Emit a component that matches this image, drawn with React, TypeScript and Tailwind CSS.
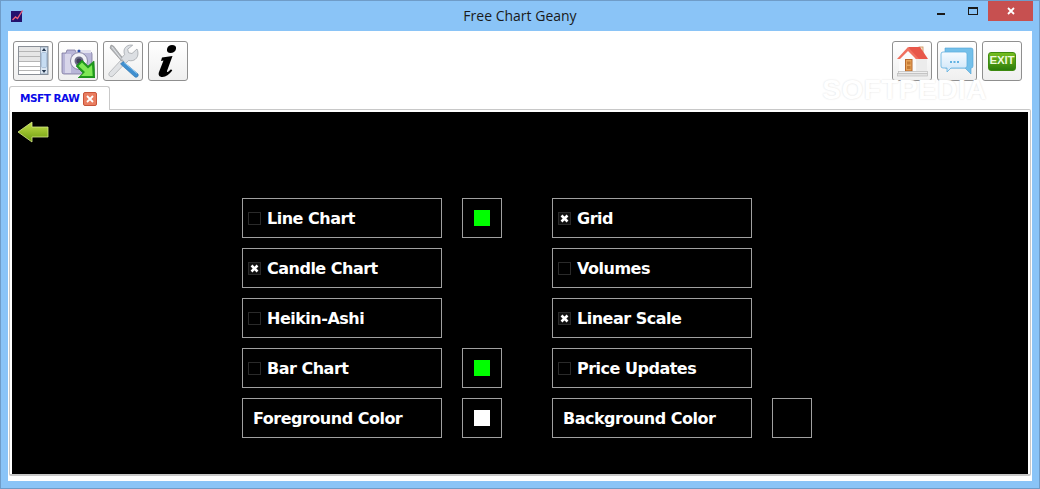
import React from 'react';

const frameFont = { fontFamily: '"Open Sans", sans-serif' };

// toolbar icons
const ListIcon = () => (
  <svg width="34" height="34" viewBox="0 0 34 34">
    <rect x="2.500" y="2.500" width="29.500" height="28" fill="#fff" stroke="#8a8f96" />
    <rect x="3" y="3" width="21" height="15" fill="#d6d6d6" opacity="0.6" />
    <path d="M3 7.500h21M3 12.500h21M3 17.500h21M3 22.500h21M3 26.500h21" stroke="#b5b5b5" />
    <rect x="24.500" y="3" width="7" height="27" fill="#dbe6f2" stroke="#7d8ea3" strokeWidth="0.7" />
    <rect x="25.500" y="8.500" width="5" height="15" rx="1" fill="#c6dcf2" stroke="#8aa5c4" strokeWidth="0.5" />
    <path d="M28 4l2.200 3h-4.400zM28 29l2.200-3h-4.400z" fill="#26384f" />
  </svg>
);

const CameraIcon = () => (
  <svg width="34" height="34" viewBox="0 0 34 34">
    <path d="M1 9h4l1-3h8l1 2h14a2 2 0 0 1 2 2v18a2 2 0 0 1-2 2H3a2 2 0 0 1-2-2z" fill="#b9b6d8" stroke="#7d7a9f" strokeWidth="0.8" />
    <rect x="4" y="10" width="6" height="19" fill="#d8d6ea" />
    <rect x="15" y="6" width="15" height="3" fill="#e2e0ee" />
    <circle cx="18" cy="7" r="1.500" fill="#2c4fa8" />
    <circle cx="18" cy="17" r="8.500" fill="#f1f1f6" stroke="#8a88a6" />
    <circle cx="18" cy="17" r="4.500" fill="#6a6985" />
    <circle cx="18" cy="17" r="2.500" fill="#3f3e57" />
    <path d="M15 22l6-6 6 6 6-5 1 17H17l5-5z" fill="#1f9a1c" stroke="#17801a" strokeWidth="0.6" />
    <path d="M17.500 22l3.500-3.500 6 6 4-3.500.7 11H20l4-4z" fill="#7fe855" />
  </svg>
);

const ToolsIcon = () => (
  <svg width="34" height="34" viewBox="0 0 34 34">
    <path d="M5 1l2.500 1 10 13-2 2L4 4z" fill="#b4b7bb" stroke="#777" strokeWidth="0.5" />
    <path d="M6 3l10 13" stroke="#eef0f2" strokeWidth="0.8" />
    <path d="M15 16L3.500 28.500c-2 2.500 1 5.500 3.500 3.500L18.500 20z" fill="#e0e2e5" stroke="#9a9da1" strokeWidth="0.6" />
    <path d="M31 5l-5 4.500-3.500-.8-.8-3.500 5-4c-4.500-1-9 2-8.700 6.500 0 1 .2 2 .6 2.800L15 14.500l4.500 5 3.200-3c5 1.300 9.500-2 9.300-7.500 0-1.500-.4-3-1-4z" fill="#dcdfe3" stroke="#8c9095" strokeWidth="0.6" />
    <path d="M17 17.500l15 12.500c1 2-1 4-3 3L14.500 20z" fill="#3f8fd0" stroke="#2a6ea8" strokeWidth="0.6" />
    <path d="M18 18.500l13 11" stroke="#8cc6f0" strokeWidth="1" />
  </svg>
);

const InfoIcon = () => (
  <svg width="34" height="34" viewBox="0 0 34 34">
    <path d="M21 1c3 0 4.500 1.500 4 4-.5 2.500-3 4-5.500 4S15.500 7.500 16 5c.5-2.500 2.500-4 5-4z" fill="#000" />
    <path d="M11 13.500l10.500-1.500L16 27c-.3 1 .7 1.200 1.500.6l2.500-2.300 1.300 1.200C18 30.500 15 33 11.500 33 8 33 7 30.800 8 28l4.500-11.500-2.500.5z" fill="#000" />
  </svg>
);

const HomeIcon = () => (
  <svg width="34" height="34" viewBox="0 0 34 34">
    <rect x="24" y="3" width="4" height="8" fill="#f5e6cf" stroke="#c98b50" strokeWidth="0.8" />
    <path d="M4 15l9-8 8 8v12H4z" fill="#fbfbfb" />
    <path d="M21 15h11v12H21z" fill="#ececec" />
    <path d="M13 3h12l8 12H21z" fill="#e8574a" />
    <path d="M13 3L2 15h3l8-8 8 8h3z" fill="#f0705f" />
    <rect x="10.500" y="15.500" width="6.500" height="11.500" fill="#e7a45a" stroke="#b8692c" />
    <rect x="12" y="17.500" width="3.500" height="3" fill="#c67b35" />
    <rect x="12" y="22" width="3.500" height="3" fill="#c67b35" />
    <rect x="3.500" y="27.500" width="29" height="2" fill="#efefef" stroke="#bdbdbd" strokeWidth="0.7" />
    <rect x="2.500" y="29.500" width="30" height="2.500" fill="#e2e2e2" stroke="#bdbdbd" strokeWidth="0.7" />
  </svg>
);

const ChatIcon = () => (
  <svg width="34" height="34" viewBox="0 0 34 34">
    <defs>
      <linearGradient id="chatFront" x1="0" y1="0" x2="0" y2="1">
        <stop offset="0" stopColor="#f6fbff" />
        <stop offset="1" stopColor="#cde5f8" />
      </linearGradient>
    </defs>
    <path d="M5 4h26a2 2 0 0 1 2 2v16a2 2 0 0 1-2 2v6l-6-6H5z" fill="#74c0ea" stroke="#4da3d6" strokeWidth="0.6" />
    <path d="M3 8h22a2 2 0 0 1 2 2v12a2 2 0 0 1-2 2H11l-4 4v-4H3a2 2 0 0 1-2-2V10a2 2 0 0 1 2-2z" fill="url(#chatFront)" stroke="#5fb0e0" strokeWidth="0.8" />
    <rect x="10" y="17" width="2" height="2" fill="#62b2e2" />
    <rect x="13.500" y="17" width="2" height="2" fill="#62b2e2" />
    <rect x="17" y="17" width="2" height="2" fill="#62b2e2" />
  </svg>
);

const ExitBadge = () => (
  <span className="flex h-[19px] w-[28px] items-center justify-center rounded-[3px] border border-[#3d8a10] bg-gradient-to-b from-[#74bd1e] to-[#2c7d0a] text-[11.5px] leading-none font-bold tracking-[-0.2px] text-[#eef9d8] font-['Liberation_Sans',sans-serif]">
    EXIT
  </span>
);

const BackArrow = () => (
  <svg width="32" height="22" viewBox="0 0 32 22" className="block">
    <defs>
      <linearGradient id="backFill" x1="0" y1="0" x2="0" y2="1">
        <stop offset="0" stopColor="#c4e04a" />
        <stop offset="1" stopColor="#6b9a0e" />
      </linearGradient>
    </defs>
    <path d="M1 11L15 1v5h16v10H15v5z" fill="url(#backFill)" stroke="#d8ea8a" strokeWidth="0.8" />
  </svg>
);

const ToolButton = ({ children }: { children: React.ReactNode }) => (
  <button className="flex h-[40px] w-[40px] items-center justify-center rounded-[3px] border border-[#8f8f8f] bg-gradient-to-b from-white to-[#efefef]">
    {children}
  </button>
);

const OptionRow = ({ label, checked }: { label: string; checked?: boolean }) => (
  <div className="flex h-[40px] w-[200px] items-center border border-[#a0a0a0] pl-[5px]">
    <span className={`flex h-[13px] w-[13px] items-center justify-center border border-[#2a2a2a] ${checked ? 'bg-[#111]' : ''}`}>
      {checked && (
        <svg width="9" height="9" viewBox="0 0 9 9">
          <path d="M1.500 1.500l6 6M7.500 1.500l-6 6" stroke="#fff" strokeWidth="2.600" />
        </svg>
      )}
    </span>
    <span className="mt-[1px] ml-[6px] text-[16px] leading-none font-bold tracking-[-0.5px] text-white">{label}</span>
  </div>
);

const ColorLabel = ({ label }: { label: string }) => (
  <div className="flex h-[40px] w-[200px] items-center border border-[#a0a0a0] pl-[10px]">
    <span className="mt-[1px] text-[16px] leading-none font-bold tracking-[-0.5px] text-white">{label}</span>
  </div>
);

const Swatch = ({ color }: { color?: string }) => (
  <div className="flex h-[40px] w-[40px] items-center justify-center border border-[#a0a0a0]">
    {color === 'green' && <div className="h-[16px] w-[16px] bg-[#00ff00]" />}
    {color === 'white' && <div className="h-[16px] w-[16px] bg-white" />}
  </div>
);

const Empty = () => <div className="h-[40px] w-[40px]" />;

export default function App() {
  return (
    <div className="flex h-[489px] w-[1040px] flex-col overflow-hidden border border-[#6f9cc8] bg-[#8ac4f7] font-['DejaVu_Sans',sans-serif]">
      {/* title bar */}
      <div className="flex h-[30px] shrink-0 items-start">
        <div className="w-[113px]">
          <svg width="13" height="13" viewBox="0 0 13 13" className="mt-[8px] ml-[10px]">
            <rect y="2" width="11" height="11" fill="#23126e" />
            <path d="M1.500 11l3-3 2 1.500L11.500 1.500" stroke="#e8607a" strokeWidth="1.400" fill="none" />
          </svg>
        </div>
        <div className="flex-1 pt-[6px] text-center text-[14px] leading-[18px] text-[#1a1a1a]" style={frameFont}>
          Free Chart Geany
        </div>
        <div className="flex h-[20px] w-[113px] items-center">
          <div className="flex h-[20px] w-[29px] items-center justify-center">
            <div className="mt-[5px] h-[2px] w-[8px] bg-[#1a1a1a]" />
          </div>
          <div className="ml-[3px] flex h-[20px] w-[29px] items-center justify-center">
            <div className="h-[8px] w-[10px] border border-t-2 border-[#1a1a1a]" />
          </div>
          <div className="ml-[1px] flex h-[20px] w-[45px] items-center justify-center bg-[#c75050]">
            <svg width="8" height="8" viewBox="0 0 8 8">
              <path d="M1 1l6 6M7 1l-6 6" stroke="#fff" strokeWidth="1.800" />
            </svg>
          </div>
        </div>
      </div>

      {/* client area */}
      <div className="mx-[7px] flex h-[450px] flex-col bg-white pt-[10px]">
        {/* toolbar */}
        <div className="relative flex h-[40px] shrink-0 justify-between pr-[10px] pl-[5px]">
          <div className="flex gap-[5px]">
            <ToolButton><ListIcon /></ToolButton>
            <ToolButton><CameraIcon /></ToolButton>
            <ToolButton><ToolsIcon /></ToolButton>
            <ToolButton><InfoIcon /></ToolButton>
          </div>
          <div className="flex gap-[5px]">
            <ToolButton><HomeIcon /></ToolButton>
            <ToolButton><ChatIcon /></ToolButton>
            <ToolButton><ExitBadge /></ToolButton>
          </div>
          <span className="absolute top-[35px] right-[45px] text-[28px] leading-none font-bold tracking-[0.5px] text-white [text-shadow:0_0_2px_#dcdcdc] font-['Liberation_Sans',sans-serif]">
            SOFTPEDIA
          </span>
        </div>

        {/* tab strip */}
        <div className="mt-[5px] flex h-[24px] shrink-0">
          <div className="relative z-10 ml-[1px] flex h-[24px] w-[101px] items-center rounded-t-[3px] border border-b-0 border-[#c9c9c9] bg-white pl-[10px]">
            <span className="text-[10.5px] leading-none font-bold tracking-[-0.5px] text-[#0a0ae8]">MSFT RAW</span>
            <span className="ml-[4px] flex h-[14px] w-[14px] items-center justify-center rounded-[2px] border border-[#c8553a] bg-[#e97d60]">
              <svg width="8" height="8" viewBox="0 0 8 8">
                <path d="M1 1l6 6M7 1l-6 6" stroke="#fff" strokeWidth="1.800" />
              </svg>
            </span>
          </div>
        </div>

        {/* chart panel */}
        <div className="mx-[1px] -mt-px h-[367px] shrink-0 rounded-[2px] border border-b-2 border-[#c8c8c8] bg-white px-[2px] pt-[2px]">
          <div className="h-[362px] bg-black pt-[9px] pl-[5px]">
            <BackArrow />
            <div className="mt-[55px] ml-[225px] flex gap-[50px]">
              <div className="flex flex-col gap-[10px]">
                <div className="flex gap-[20px]"><OptionRow label="Line Chart" /><Swatch color="green" /></div>
                <div className="flex gap-[20px]"><OptionRow label="Candle Chart" checked /><Empty /></div>
                <div className="flex gap-[20px]"><OptionRow label="Heikin-Ashi" /><Empty /></div>
                <div className="flex gap-[20px]"><OptionRow label="Bar Chart" /><Swatch color="green" /></div>
                <div className="flex gap-[20px]"><ColorLabel label="Foreground Color" /><Swatch color="white" /></div>
              </div>
              <div className="flex flex-col gap-[10px]">
                <OptionRow label="Grid" checked />
                <OptionRow label="Volumes" />
                <OptionRow label="Linear Scale" checked />
                <OptionRow label="Price Updates" />
                <div className="flex gap-[20px]"><ColorLabel label="Background Color" /><Swatch /></div>
              </div>
            </div>
          </div>
        </div>
      </div>
    </div>
  );
}
